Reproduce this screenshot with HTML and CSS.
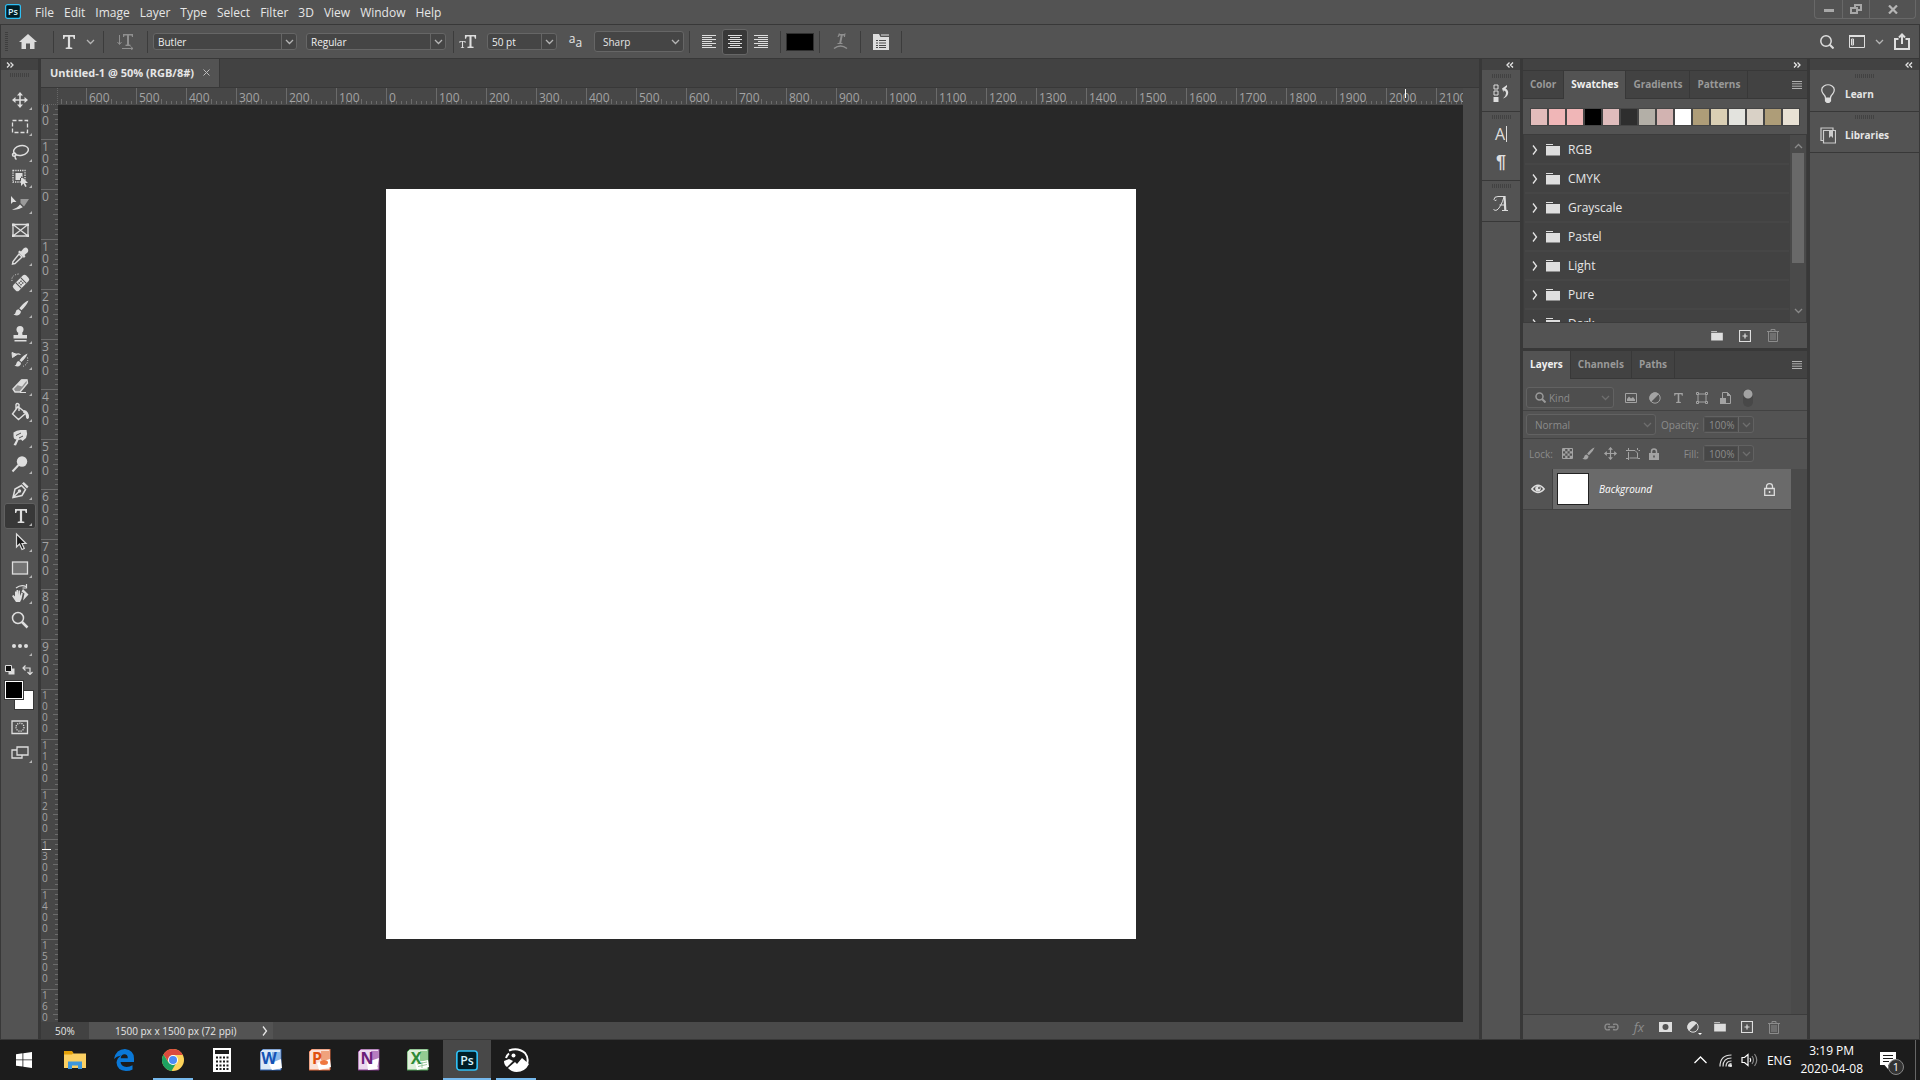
FILE: index.html
```html
<!DOCTYPE html>
<html lang="en">
<head>
  <meta charset="UTF-8" />
  <meta name="viewport" content="width=device-width, initial-scale=1.0"/>
  <title>Untitled-1 @ 50% (RGB/8#)</title>
  <link rel="stylesheet" href="styles.css">
</head>
<body>

  <!-- shared shapes -->
  <svg class="sprite" aria-hidden="true">
    <symbol id="chevron" viewBox="0 0 9 6"><path d="M1 1l3.500 3.500L8 1" fill="none" stroke="currentColor" stroke-width="1.300"/></symbol>
    <symbol id="expand" viewBox="0 0 6 12"><path d="M1 1.500L4.500 6 1 10.500" fill="none" stroke="currentColor" stroke-width="1.300"/></symbol>
    <symbol id="dbl-left" viewBox="0 0 8 6"><path d="M3.500.500L1 3l2.500 2.500M7 .500L4.500 3 7 5.500" fill="none" stroke="currentColor" stroke-width="1.300"/></symbol>
    <symbol id="dbl-right" viewBox="0 0 8 6"><path d="M1 .500L3.500 3 1 5.500M4.500.500L7 3 4.500 5.500" fill="none" stroke="currentColor" stroke-width="1.300"/></symbol>
    <symbol id="folder" viewBox="0 0 14 12"><path d="M0 0h7v1H0zM0 2h14v9.500H0z" fill="currentColor"/></symbol>
    <symbol id="plus" viewBox="0 0 12 12"><path d="M.5.5h11v11H.5zM6 3.500v5M3.500 6h5" fill="none" stroke="currentColor" stroke-width="1.200"/></symbol>
    <symbol id="trash" viewBox="0 0 12 13"><path d="M0 2.500h12M4 2V.500h4V2M1.500 3v9.500h9V3M4 4v7M6 4v7M8 4v7" fill="none" stroke="currentColor"/></symbol>
    <symbol id="lines" viewBox="0 0 10 8"><path d="M0 .5h10M0 2.800h10M0 5.200h10M0 7.500h10" stroke="currentColor"/></symbol>
    <symbol id="big-t" viewBox="0 0 14 14"><path d="M1 0h12v4h-1.200L11 1.700H8.100v10.600l2.200.4V14H3.700v-1.300l2.200-.4V1.700H3L2.200 4H1z" fill="currentColor"/></symbol>
    <symbol id="move" viewBox="0 0 16 16"><path d="M8 1v14M1 8h14" stroke="currentColor" stroke-width="1.500"/><path d="M8 0l3 3.500H5zM8 16l3-3.500H5zM0 8l3.500-3v6zM16 8l-3.500-3v6z" fill="currentColor"/></symbol>
    <symbol id="brush" viewBox="0 0 16 16"><path d="M15.500.500Q11 2 6.300 8.300l2.200 2Q14 5 15.500.500zM5.500 9.200Q3 9.500 2.700 12 2.500 14 .5 14.500q4.500 2 6.500-.5 1.200-1.500.8-2.800z" fill="currentColor"/></symbol>
    <symbol id="adjust" viewBox="0 0 12 12"><circle cx="6" cy="6" r="5.200" fill="none" stroke="currentColor"/><path d="M10 2A5.600 5.600 0 1 0 2 10z" fill="currentColor"/></symbol>
    <symbol id="ps" viewBox="0 0 16 15"><rect x=".6" y=".6" width="14.800" height="13.800" rx="2" fill="#001d26" stroke="#2fc0f5" stroke-width="1.200"/><text x="8" y="10.800" text-anchor="middle" font-size="9" font-weight="600" fill="#d8f3fd">Ps</text></symbol>
  </svg>

  <header class="menubar">
    <svg class="app-logo" width="16" height="15"><use href="#ps"/></svg>
    <nav class="menus">
      <button>File</button><button>Edit</button><button>Image</button><button>Layer</button><button>Type</button><button>Select</button><button>Filter</button><button>3D</button><button>View</button><button>Window</button><button>Help</button>
    </nav>
    <div class="window-buttons">
      <button aria-label="Minimize"><svg width="10" height="10"><path d="M0 5h10v3H0z" fill="#a8a8a8"/></svg></button>
      <button aria-label="Restore"><svg width="12" height="10" fill="none" stroke="#a8a8a8" stroke-width="2"><path d="M5 3V1h6v5H8M1 4h6v5H1z"/></svg></button>
      <button aria-label="Close" class="wide"><svg width="10" height="9" stroke="#b5b5b5" stroke-width="2.200"><path d="M1 .5l8 8M9 .5l-8 8"/></svg></button>
    </div>
  </header>

  <div class="options">
    <span class="grip-v"></span>
    <button class="opt home" aria-label="Home"><svg width="18" height="15" fill="#dcdcdc"><path d="M9 0l9 8h-2.500v7h-4.500V9.500H7V15H2.500V8H0z"/></svg></button>
    <span class="sep first"></span>
    <button class="opt tool-pick" aria-label="Type tool presets"><svg class="bright" width="14" height="14"><use href="#big-t"/></svg><svg width="9" height="6"><use href="#chevron"/></svg></button>
    <span class="sep"></span>
    <button class="opt orient" aria-label="Toggle text orientation"><svg class="dim" width="18" height="16"><path d="M2.500 1v9M0.500 8l2 2.500 2-2.500M5 14.500h11M13.500 12.500l2.500 2-2.500 2" fill="none" stroke="currentColor"/><path d="M6 0h10v3h-1l-.5-1.500H12v9l1.500.3V12H8.500v-1.200l1.500-.3v-9H7.500L7 3H6z" fill="currentColor"/></svg></button>
    <span class="sep"></span>
    <div class="combo font"><input type="text" value="Butler" aria-label="Font family"><button aria-label="Show fonts"><svg width="9" height="6"><use href="#chevron"/></svg></button></div>
    <div class="combo style"><input type="text" value="Regular" aria-label="Font style"><button aria-label="Show styles"><svg width="9" height="6"><use href="#chevron"/></svg></button></div>
    <span class="sep wide"></span>
    <span class="opt size-icon"><svg class="bright" width="18" height="14"><use href="#big-t" x="5" width="13" height="13"/><use href="#big-t" x="0" y="6" width="7" height="7"/></svg></span>
    <div class="combo size"><input type="text" value="50 pt" aria-label="Font size"><button aria-label="Show sizes"><svg width="9" height="6"><use href="#chevron"/></svg></button></div>
    <span class="opt aa"><span>a</span><span class="low">a</span></span>
    <div class="picker sharp"><select aria-label="Anti-aliasing"><option>Sharp</option></select><svg width="9" height="6"><use href="#chevron"/></svg></div>
    <span class="sep mid"></span>
    <div class="aligns">
      <button aria-label="Left align"><svg width="14" height="13" stroke="#dedede"><path d="M0 .5h14M0 2.500h10M0 4.500h14M0 6.500h10M0 8.500h14M0 10.500h10M0 12.500h14"/></svg></button>
      <button class="on" aria-label="Center"><svg width="14" height="13" stroke="#dedede"><path d="M0 .5h14M2 2.500h10M0 4.500h14M2 6.500h10M0 8.500h14M2 10.500h10M0 12.500h14"/></svg></button>
      <button aria-label="Right align"><svg width="14" height="13" stroke="#dedede"><path d="M0 .5h14M4 2.500h10M0 4.500h14M4 6.500h10M0 8.500h14M4 10.500h10M0 12.500h14"/></svg></button>
    </div>
    <span class="sep"></span>
    <button class="text-color" aria-label="Text color"></button>
    <span class="sep mid"></span>
    <button class="opt" aria-label="Warp text"><svg class="dim" width="15" height="17"><path d="M6 0l1 1h4l1.500-1-.5 4h-1l-.3-1.500H9.700L8.200 10H9.500v1h-5v-1h1.700L7.700 2.500H6.500L5.500 4h-1z" fill="currentColor"/><path d="M1 15.500q6.500-5 13 0" fill="none" stroke="currentColor" stroke-width="1.500"/></svg></button>
    <span class="sep"></span>
    <button class="opt" aria-label="Character and paragraph panels"><svg width="16" height="16"><path d="M0 0h6l1.500 3H16v13H0z" fill="#dedede"/><path d="M8 1h8" stroke="#9a9a9a" stroke-width="2"/><path d="M3 6.500h2M6 6.500h7M3 9h2M6 9h7M3 11.500h2M6 11.500h7M3 13.500h2M6 13.500h7" stroke="#4a4a4a"/></svg></button>
    <span class="sep"></span>
    <div class="options-right">
      <button aria-label="Search"><svg width="14" height="14" fill="none" stroke="#dedede"><circle cx="6" cy="6" r="5.200" stroke-width="1.500"/><path d="M9.800 9.800l3.700 3.700" stroke-width="2"/></svg></button>
      <button aria-label="Workspace"><svg width="16" height="13" fill="none" stroke="#dedede"><path d="M.5 1h15v11.500H.5zM2.500 4h2v6h-2zM2.500 6h2M2.500 8h2"/><path d="M0 1h16" stroke-width="2"/></svg></button>
      <button aria-label="Workspace menu"><svg width="9" height="6"><use href="#chevron"/></svg></button>
      <button aria-label="Share"><svg width="16" height="17" fill="none" stroke="#dedede" stroke-width="2"><path d="M4.500 6H1v10h14V6h-3.500M8 11V2M5 4.500l3-3 3 3"/></svg></button>
    </div>
  </div>

  <main class="workspace">
    <aside class="toolbox">
      <button class="col-head left" aria-label="Expand tools"><svg width="8" height="6"><use href="#dbl-right"/></svg></button>
      <span class="grip"></span>
      <div class="tools">
        <button class="tool" aria-label="Move"><svg viewBox="0 0 24 24"><use href="#move" x="4" y="4" width="16" height="16"/></svg></button>
        <button class="tool" aria-label="Rectangular marquee"><svg viewBox="0 0 24 24"><rect x="4.500" y="6.500" width="15" height="12" fill="none" stroke="currentColor" stroke-width="1.300" stroke-dasharray="4 2"/></svg></button>
        <button class="tool" aria-label="Lasso"><svg viewBox="0 0 24 24" fill="none" stroke="currentColor" stroke-width="1.500"><ellipse cx="13" cy="10.500" rx="7.500" ry="4.800" transform="rotate(-12 13 10.500)"/><path d="M6 13q-2 1-1.200 2.800 2 1 3.200-.8-.5-2.500-2-2M7 16.500q0 2 1.500 3"/></svg></button>
        <button class="tool" aria-label="Object selection"><svg viewBox="0 0 24 24"><rect x="5" y="4.500" width="12" height="11.500" fill="none" stroke="currentColor" stroke-width="1.300" stroke-dasharray="1.300 1"/><path d="M7.500 7h7v5h-2.500v2H7.500zM13 10v10l2.500-2.500 1.700 3.500 1.500-.8-1.700-3.200H20z" fill="currentColor"/></svg></button>
        <button class="tool" aria-label="Slice select"><svg viewBox="0 0 24 24"><path d="M3 4v8l2-2h3.500zM4 17.500q5-1 8-5l2.800 2.800Q10 18.500 4 17.500z" fill="currentColor"/><path d="M12.500 7H21l-5 7.500-3.500-3.500z" fill="#9a9a9a"/></svg></button>
        <button class="tool bare" aria-label="Frame"><svg viewBox="0 0 24 24"><path d="M5 6.500h15v11.500H5zM5 6.500L20 18M20 6.500L5 18" fill="none" stroke="currentColor" stroke-width="1.300"/><path d="M4 5.500h2.500V8H4zM18.500 5.500H21V8h-2.500zM4 16.500h2.500V19H4zM18.500 16.500H21V19h-2.500z" fill="currentColor"/></svg></button>
        <button class="tool" aria-label="Eyedropper"><svg viewBox="0 0 24 24"><path d="M11 10l3 3-7 6.500-2.500.5.500-2.500z" fill="none" stroke="currentColor" stroke-width="1.400"/><path d="M10 8l1.700-1.500L13 7.500l2.500-3q2.500-2 4 0t0 4l-3 2.500 1 1.300-1.500 1.700z" fill="currentColor"/></svg></button>
        <button class="tool" aria-label="Spot healing brush"><svg viewBox="0 0 24 24"><g transform="rotate(-45 13 13)"><rect x="4" y="9" width="18" height="8" rx="2.500" fill="currentColor"/><path d="M9.500 9v8M16.500 9v8" stroke="#535353"/><path d="M11 11h1.500v1.500H11zM13.500 11H15v1.500h-1.500zM11 13.500h1.500V15H11zM13.500 13.500H15V15h-1.500z" fill="#535353"/></g><path d="M4 11q-1-6 6.500-7" fill="none" stroke="currentColor" stroke-dasharray="1 1.500"/></svg></button>
        <button class="tool" aria-label="Brush"><svg viewBox="0 0 24 24"><use href="#brush" x="5" y="4" width="16" height="16"/></svg></button>
        <button class="tool" aria-label="Clone stamp"><svg viewBox="0 0 24 24"><circle cx="12" cy="7.500" r="3.500" fill="currentColor"/><path d="M10.500 9h3.500l.5 4H19v3.500H5.500V13H10zM6.500 18h12v1.500h-12z" fill="currentColor"/></svg></button>
        <button class="tool" aria-label="History brush"><svg viewBox="0 0 24 24"><use href="#brush" x="6" y="5" width="14" height="14"/><path d="M4 4.500l5 2-4.500 3zM7 6.500q4-1.500 5.500 0" fill="currentColor" stroke="currentColor"/><path d="M19.500 9.500q1.500 7-6 9.500" fill="none" stroke="currentColor" stroke-dasharray="1 1.500"/></svg></button>
        <button class="tool" aria-label="Eraser"><svg viewBox="0 0 24 24"><path d="M5 15l8.500-9h5.500l.5 3-7.500 9H7z" fill="#8f8f8f" stroke="currentColor" stroke-width="1.400"/><path d="M9 11l5-5.500h5.500l-5.500 7z" fill="currentColor"/><path d="M12 18.500h6" stroke="currentColor"/></svg></button>
        <button class="tool" aria-label="Paint bucket"><svg viewBox="0 0 24 24"><path d="M10 6.500l8 6.500-7.500 6.500-6-5.500zM11 11V4.500q-2-2-3 0V10" fill="none" stroke="currentColor" stroke-width="1.400"/><path d="M16 10q5 1 5 7.500-1.500 3-3 0 0-4-3-5z" fill="currentColor"/></svg></button>
        <button class="tool" aria-label="Smudge"><svg viewBox="0 0 24 24"><path d="M5.500 19l3-5.500q-3 0-3-3.500V6.500q3-2.500 7-2.500h6q1.500 4-.5 8l-3.500 3-1.500-1.500-2.500.5L8 19.500z" fill="currentColor"/><path d="M8 9.500l5-2.500M11 12l4-2" stroke="#535353"/></svg></button>
        <button class="tool" aria-label="Dodge"><svg viewBox="0 0 24 24"><circle cx="14" cy="9.500" r="5.200" fill="currentColor"/><path d="M10.500 13L4.500 19.500" stroke="currentColor" stroke-width="2"/></svg></button>
        <button class="tool" aria-label="Pen"><svg viewBox="0 0 24 24"><path d="M5 19.500l2-8.500 6.500-3.500 4 4-3.500 6-9 2zM5 19.500l6-6" fill="none" stroke="currentColor" stroke-width="1.500"/><circle cx="11.500" cy="13" r="1.700" fill="currentColor"/><path d="M14 5.500l1.800-1.500 4.700 4.500-1.500 2z" fill="currentColor"/></svg></button>
        <button class="tool on" aria-label="Horizontal type"><svg viewBox="0 0 24 24"><use href="#big-t" x="6" y="5" width="14" height="14"/></svg></button>
        <button class="tool" aria-label="Path selection"><svg viewBox="0 0 24 24"><path d="M8.500 4v13l3-3 2.500 5.500 2.300-1-2.300-5h4z" fill="#1c1c1c" stroke="currentColor" stroke-width="1.200"/></svg></button>
        <button class="tool" aria-label="Rectangle"><svg viewBox="0 0 24 24"><rect x="4.500" y="6" width="15" height="12" fill="#747474" stroke="currentColor" stroke-width="1.300"/></svg></button>
        <button class="tool" aria-label="Rotate view"><svg viewBox="0 0 24 24"><path d="M8 20l-4-6 1.500-1 1.500 1.500V9.500h1.500V13V8H10v5l.5-4.500H12V14l1.500-3.500 1.300.5-1.300 6-1.500 3z" fill="currentColor"/><path d="M15 7l5.500 5.500-5.500 6 1.500-7-3-2z" fill="currentColor"/><path d="M8 6q5-4 10-1.500M18.500 2v4h-4" fill="none" stroke="currentColor" stroke-width="1.200"/></svg></button>
        <button class="tool bare" aria-label="Zoom"><svg viewBox="0 0 24 24" fill="none" stroke="currentColor"><circle cx="10" cy="10" r="5.500" stroke-width="1.500"/><path d="M14 14l5.500 5.500" stroke-width="2.500"/></svg></button>
        <button class="tool" aria-label="Edit toolbar"><svg viewBox="0 0 24 24" fill="currentColor"><circle cx="6" cy="12" r="2"/><circle cx="12" cy="12" r="2"/><circle cx="18" cy="12" r="2"/></svg></button>
      </div>
      <div class="color-minis">
        <button aria-label="Default colors"><svg width="10" height="10"><path d="M3.500 3.500h6v6h-6z" fill="#ddd"/><path d="M.5.5h6v6h-6z" fill="#111" stroke="#ddd"/></svg></button>
        <button aria-label="Switch colors"><svg width="11" height="10" fill="none" stroke="#ddd" stroke-width="1.200"><path d="M3.500.500L1 3l2.500 2.500M1 3h7v6M5.500 7L8 9.500 10.500 7"/></svg></button>
      </div>
      <div class="fgbg"><button class="bg" aria-label="Background color"></button><button class="fg" aria-label="Foreground color"></button></div>
      <button class="tool bare" aria-label="Quick mask"><svg viewBox="0 0 24 24" fill="none" stroke="currentColor" stroke-width="1.300"><path d="M4 6h15.500v12.500H4z"/><circle cx="12" cy="12.200" r="4" stroke-dasharray="1.200 1"/></svg></button>
      <button class="tool" aria-label="Screen mode"><svg viewBox="0 0 24 24" fill="#535353" stroke="currentColor" stroke-width="1.300"><path d="M4 9h10v8H4z"/><path d="M9 6h11v8H9z"/></svg></button>
    </aside>

    <section class="document">
      <div class="doc-tabs">
        <div class="doc-tab"><span>Untitled-1 @ 50% (RGB/8#)</span><button aria-label="Close document"><svg width="7" height="7" stroke="#bdbdbd"><path d="M.5.5l6 6M6.500.500l-6 6"/></svg></button></div>
      </div>
      <div class="doc-grid">
        <div class="ruler-corner"></div>
        <div class="ruler-x" id="rulerX"><span class="mark"></span></div>
        <div class="ruler-y" id="rulerY"><span class="mark"></span></div>
        <div class="canvas"><div class="artboard"></div></div>
        <div class="scroll-y"></div>
      </div>
      <footer class="status">
        <input type="text" value="50%" aria-label="Zoom level">
        <div class="doc-info"><span>1500 px x 1500 px (72 ppi)</span><button aria-label="Status options"><svg width="6" height="12"><use href="#expand"/></svg></button></div>
      </footer>
    </section>

    <aside class="strip">
      <button class="col-head" aria-label="Expand panels"><svg width="8" height="6"><use href="#dbl-left"/></svg></button>
      <div class="dock">
        <span class="grip"></span>
        <button aria-label="History"><svg width="16" height="18"><path d="M1 1h4v4H1zM1 7h4v4H1z" fill="none" stroke="#ddd"/><path d="M.5 13h5v5h-5z" fill="#ddd"/><path d="M9 4.500l5-3.500v2l-1.500 1.500q3.500 2 2.500 5.500-1 3-5 4.500 3-2.500 3-5 0-3-2.500-3v2z" fill="#ddd"/></svg></button>
      </div>
      <div class="dock">
        <span class="grip"></span>
        <button class="glyph-a" aria-label="Character">A<span class="caret"></span></button>
        <button class="glyph-p" aria-label="Paragraph">¶</button>
      </div>
      <div class="dock">
        <span class="grip"></span>
        <button aria-label="Glyphs"><svg width="16" height="17" fill="none" stroke="#ddd"><path d="M12 1.500H5Q1 1.500 1 4.500q1 2 2.500.5M11 2Q8 12 4 15q-2 1-3.500-.5M6.500 10h5.500M9 15.500h6"/><path d="M11.500 1l.8 14.500" stroke-width="2.200"/></svg></button>
      </div>
    </aside>

    <div class="panels">
      <button class="col-head right" aria-label="Collapse panels"><svg width="8" height="6"><use href="#dbl-right"/></svg></button>
      <section class="panel">
        <div class="tabs">
          <button>Color</button><button class="on">Swatches</button><button>Gradients</button><button>Patterns</button>
          <button class="panel-menu" aria-label="Panel menu"><svg width="10" height="8"><use href="#lines"/></svg></button>
        </div>
        <div class="recent" id="recent"></div>
        <div class="group-wrap">
          <ul class="groups" id="groups"></ul>
          <div class="list-scroll"><svg width="9" height="6" class="flip"><use href="#chevron"/></svg><span class="thumb"></span><svg width="9" height="6"><use href="#chevron"/></svg></div>
        </div>
        <div class="panel-foot">
          <button aria-label="New group"><svg width="12" height="10"><use href="#folder"/></svg></button>
          <button aria-label="New swatch"><svg width="12" height="12"><use href="#plus"/></svg></button>
          <button class="off" aria-label="Delete swatch"><svg width="12" height="13"><use href="#trash"/></svg></button>
        </div>
      </section>

      <section class="panel layers">
        <div class="tabs">
          <button class="on">Layers</button><button>Channels</button><button>Paths</button>
          <button class="panel-menu" aria-label="Panel menu"><svg width="10" height="8"><use href="#lines"/></svg></button>
        </div>
        <div class="row filter">
          <div class="picker kind"><svg width="11" height="11" fill="none" stroke="#999" stroke-width="1.500"><circle cx="4.500" cy="4.500" r="3.500"/><path d="M7 7l3.500 3.500" stroke-width="2"/></svg><select aria-label="Filter kind"><option>Kind</option></select><svg width="9" height="6"><use href="#chevron"/></svg></div>
          <div class="filters">
            <button aria-label="Pixel layers"><svg width="12" height="10"><path d="M.5.5h11v9H.5z" fill="none" stroke="currentColor"/><path d="M2 8V6l2-2.500 2 2 2-1.500L10 6.500V8z" fill="currentColor"/></svg></button>
            <button aria-label="Adjustment layers"><svg width="12" height="12"><use href="#adjust"/></svg></button>
            <button aria-label="Type layers"><svg width="11" height="10"><use href="#big-t"/></svg></button>
            <button aria-label="Shape layers"><svg width="12" height="12" fill="none" stroke="currentColor"><path d="M2 2h8v8H2z"/><path d="M.5.5h2v2h-2zM9.500.5h2v2h-2zM.5 9.500h2v2h-2zM9.500 9.500h2v2h-2z" fill="#535353"/></svg></button>
            <button aria-label="Smart objects"><svg width="11" height="12"><path d="M2.500 6V.500h5L10.500 3.500v8H6" fill="none" stroke="currentColor"/><path d="M0 6h6v6H0zM7 0v4h4z" fill="currentColor"/></svg></button>
            <label class="toggle"><input type="checkbox" aria-label="Layer filtering"><span></span></label>
          </div>
        </div>
        <div class="row blend">
          <div class="picker mode"><select aria-label="Blend mode"><option>Normal</option></select><svg width="9" height="6"><use href="#chevron"/></svg></div>
          <label for="opacity">Opacity:</label>
          <div class="combo percent"><input type="text" id="opacity" value="100%"><button aria-label="Opacity slider"><svg width="9" height="6"><use href="#chevron"/></svg></button></div>
        </div>
        <div class="row locks">
          <span>Lock:</span>
          <div class="lock-set">
            <button aria-label="Lock transparent pixels"><svg width="11" height="11"><path d="M.5.5h10v10H.5z" fill="none" stroke="currentColor"/><path d="M1 1h2.200v2.200H1zM5.500 1h2.200v2.200H5.500zM3.200 3.200h2.300v2.300H3.200zM7.700 3.200H10v2.300H7.700zM1 5.500h2.200v2.200H1zM5.500 5.500h2.200v2.200H5.500zM3.200 7.700h2.300V10H3.200zM7.700 7.700H10V10H7.700z" fill="currentColor"/></svg></button>
            <button aria-label="Lock image pixels"><svg width="13" height="13"><use href="#brush"/></svg></button>
            <button aria-label="Lock position"><svg width="13" height="13"><use href="#move"/></svg></button>
            <button aria-label="Lock artboard nesting"><svg width="14" height="12" fill="none" stroke="currentColor"><path d="M0 2.500h9L11.500 5v5H3.500M2.500 0v2M2.500 4v8M0 10.500h2M11.500 10.500H14M11.500 0v2M12.500 2.500H14" /></svg></button>
            <button aria-label="Lock all"><svg width="10" height="12"><path d="M2.500 6V3.500q0-2.500 2.500-2.500t2.500 2.500V6" fill="none" stroke="currentColor" stroke-width="1.500"/><path d="M0 5h10v7H0z" fill="currentColor"/><path d="M4.200 7.500h1.600v2H4.200z" fill="#535353"/></svg></button>
          </div>
          <label for="fill">Fill:</label>
          <div class="combo percent"><input type="text" id="fill" value="100%"><button aria-label="Fill slider"><svg width="9" height="6"><use href="#chevron"/></svg></button></div>
        </div>
        <div class="layer-list">
          <div class="layer">
            <button class="eye" aria-label="Toggle visibility"><svg width="14" height="10"><path d="M.8 5Q7-2.500 13.200 5 7 12 .8 5z" fill="none" stroke="#ddd" stroke-width="1.400"/><circle cx="7" cy="4.800" r="2.800" fill="#ddd"/><circle cx="8" cy="4" r="1" fill="#535353"/></svg></button>
            <div class="layer-main"><span class="preview"></span><em>Background</em><svg width="11" height="13"><path d="M2.500 5.500V3.500q0-2.800 3-2.800t3 2.800v2M.7 5.500h9.600v6.800H.7z" fill="none" stroke="#ddd" stroke-width="1.300"/><path d="M4.800 8h1.500v2H4.800z" fill="#ddd"/></svg></div>
          </div>
        </div>
        <div class="panel-foot">
          <button class="off" aria-label="Link layers"><svg width="15" height="8" fill="none" stroke="currentColor" stroke-width="1.400"><path d="M6 1.500Q1 0 1 4t5 2.500M9 1.500Q14 0 14 4T9 6.500M4 4h7"/></svg></button>
          <button class="off fx" aria-label="Layer style">fx</button>
          <button aria-label="Add mask"><svg width="13" height="10"><path d="M0 0h13v10H0z" fill="currentColor"/><circle cx="6.500" cy="5" r="3" fill="#535353"/></svg></button>
          <button class="more" aria-label="New adjustment layer"><svg width="12" height="12"><use href="#adjust"/></svg></button>
          <button aria-label="New group"><svg width="12" height="10"><use href="#folder"/></svg></button>
          <button aria-label="New layer"><svg width="12" height="12"><use href="#plus"/></svg></button>
          <button class="off" aria-label="Delete layer"><svg width="12" height="13"><use href="#trash"/></svg></button>
        </div>
      </section>
    </div>

    <aside class="side">
      <button class="col-head right" aria-label="Expand side panels"><svg width="8" height="6"><use href="#dbl-left"/></svg></button>
      <div class="dock"><span class="grip"></span><button><svg width="16" height="20" fill="none" stroke="#ddd" stroke-width="1.200"><path d="M5.500 14q0-2-2.500-4.500-3-5 1-7.500 4-2.500 8 0t1 7.500Q10.500 12 10.500 14z"/><path d="M5.500 14.500h5v2.500L9 18.500H7L5.500 17z" fill="#ddd"/></svg>Learn</button></div>
      <div class="dock"><span class="grip"></span><button><svg width="16" height="17" fill="none" stroke="#ccc" stroke-width="1.200"><path d="M3.500 3.500h12v12.500h-12zM3 13.500H1V1h12v2"/><path d="M9 4h4v7l-2-2-2 2z" fill="#ccc" stroke="none"/></svg>Libraries</button></div>
    </aside>
  </main>

  <footer class="taskbar">
    <button class="start" aria-label="Start"><svg width="16" height="16" fill="#fff"><path d="M0 2.200L6.500 1.300v6.200H0zM7.300 1.200L16 0v7.500H7.300zM0 8.300h6.500v6.300L0 13.700zM7.300 8.300H16V16l-8.700-1.200z"/></svg></button>
    <button aria-label="File Explorer"><svg width="22" height="18"><path d="M0 1h8l1.500 1.500H22V17H0z" fill="#fbd063"/><path d="M0 0h8l1.500 2L8 3.500H0z" fill="#e3a008"/><path d="M4 18v-7.500h14V18h-4v-3.500H8V18z" fill="#3e97dd"/></svg></button>
    <button aria-label="Edge"><svg width="20" height="22"><path d="M0 10Q2 0 11 0q9 1 9 9.500V13H6.500q.5 4.500 6 5 3.500 0 6-1.700v4.200Q16 22 12 22 3 21.500 2.500 13.500 3 9 7 6.500 2.500 7 0 10zM6.700 9.200h7.100q0-4-3.300-4T6.700 9.200z" fill="#0a78d7" fill-rule="evenodd"/></svg></button>
    <button class="open" aria-label="Chrome"><svg width="22" height="22"><circle cx="11" cy="11" r="11" fill="#fdd35a"/><path d="M1.500 5.500A11 11 0 0 1 20.700 6H11L6.500 13z" fill="#db4b3e"/><path d="M1.500 5.500A11 11 0 0 0 9.500 22l5-8.500L6.500 13.500z" fill="#1ea261"/><circle cx="11" cy="11" r="5" fill="#fff"/><circle cx="11" cy="11" r="4" fill="#4c8bf5"/></svg></button>
    <button aria-label="Calculator"><svg width="18" height="24"><path d="M0 0h18v24H0z" fill="#fff"/><path d="M2 2h14v4H2z" fill="#1c1c1c"/><path d="M3 9.500h13M3 13.500h13M3 17.500h13M3 21h13" stroke="#1c1c1c" stroke-width="2" stroke-dasharray="2 1.500"/></svg></button>
    <button aria-label="Word"><svg width="22" height="22"><path d="M3 0h18v21H0V3z" fill="#dbe9f7" stroke="#2a5fae"/><path d="M12 3h8v12h-8z" fill="#8db8e8"/><path d="M9 15l12-5 1 9-10 2z" fill="#fff"/><text x="9" y="15" text-anchor="middle" font-size="16" font-weight="700" fill="#1553b5">W</text></svg></button>
    <button aria-label="PowerPoint"><svg width="22" height="22"><path d="M3 0h18v21H0V3z" fill="#fbe3d8" stroke="#e2683a"/><path d="M12 2h8v9h-8z" fill="#f0a27c"/><path d="M8 14l13-4 1 8-12 3z" fill="#fff"/><ellipse cx="15" cy="13.500" rx="4" ry="2.500" fill="#ef7840"/><text x="8" y="15" text-anchor="middle" font-size="16" font-weight="700" fill="#e0520f">P</text></svg></button>
    <button aria-label="OneNote"><svg width="22" height="22"><path d="M3 0h18v21H0V3z" fill="#ecd9ee" stroke="#80368a"/><path d="M13 2h7v16h-7z" fill="#b77cc0"/><path d="M9 13l12-4-2 11-9 1z" fill="#fff"/><text x="9" y="15" text-anchor="middle" font-size="16" font-weight="700" fill="#6c1f7a">N</text></svg></button>
    <button aria-label="Excel"><svg width="22" height="22"><path d="M3 0h18v21H0V3z" fill="#e0f0dc" stroke="#4b9d52"/><path d="M13 2h7v10h-7z" fill="#93cb91"/><path d="M8 14l13-3 1 7-12 3z" fill="#fff"/><path d="M10 15l10-2M11 17.500l9-2M15 13v6" stroke="#9ac79b"/><text x="9" y="15" text-anchor="middle" font-size="16" font-weight="700" fill="#2f8a37">X</text></svg></button>
    <button class="open current" aria-label="Photoshop"><svg width="22" height="21"><use href="#ps"/></svg></button>
    <button class="open" aria-label="Photo viewer"><svg width="25" height="24"><path d="M2 10Q3 7 5 5.500M5 2.500Q14-1 21 5q4 5 2 11" fill="none" stroke="#fff" stroke-width="2"/><path d="M0 13l5-2 4 2-6 6Q0 17 0 13zM4 20l7-6 2 2 5-6 7 6q-4 8-12.500 8-5 0-8.500-4z" fill="#fff"/><circle cx="9.500" cy="7.500" r="2" fill="#fff"/></svg></button>
    <div class="tray">
      <button class="up" aria-label="Show hidden icons"><svg width="13" height="8" fill="none" stroke="#fff" stroke-width="1.300"><path d="M.5 7l6-6 6 6"/></svg></button>
      <button aria-label="Network"><svg width="13" height="13" fill="none" stroke="#ddd" stroke-width="1.200"><path d="M1 12.500Q1 1 12.500 1M4 12.500Q4 4 12.500 4M7 12.500q0-5.500 5.500-5.500M9.500 12.500q0-3 3-3"/><circle cx="11.500" cy="11.500" r="1" fill="#fff"/></svg></button>
      <button aria-label="Volume"><svg width="17" height="14" fill="none" stroke="#fff" stroke-width="1.200"><path d="M1 4.500h2.500L7 1.500v11L3.500 9.500H1zM9 5q1.500 2 0 4"/><path d="M11 3q3 4 0 8M13.500 1q4.500 6 0 12" stroke="#888"/></svg></button>
      <button class="lang">ENG</button>
      <button class="clock"><span>3:19 PM</span><span>2020-04-08</span></button>
      <button class="notify" aria-label="Notifications"><svg width="16" height="17"><path d="M0 0h16v13H8v4l-3.500-4H0z" fill="#fff"/><path d="M3 3.500h10M3 6.500h10M3 9.500h6" stroke="#1c1c1c"/></svg><span>1</span></button>
      <span class="show-desktop"></span>
    </div>
  </footer>

  <script>
    // Rulers: one block per 100 px of document, from the first one in view
    function fillRuler(id, from, to) {
      const ruler = document.getElementById(id);
      for (let n = from; n <= to; n += 100) {
        const unit = document.createElement("span");
        const value = String(Math.abs(n));
        unit.className = value.length > 3 ? "unit long" : "unit";
        unit.innerHTML = `<b>${value}</b>`;
        ruler.appendChild(unit);
      }
    }

    fillRuler("rulerX", -700, 2100);
    fillRuler("rulerY", -200, 1600);

    const recent = ["#e2bcbb", "#f0b6b7", "#f0b6b7", "#000000", "#dfbcbc", "#2e2e2e", "#b3afa7", "#d2b3b1", "#ffffff", "#ae9d78", "#dacfb4", "#e3e3de", "#d9d1c6", "#ae9d78", "#e8e1d4"];
    recent.forEach(color => {
      const chip = document.createElement("button");
      chip.style.background = color;
      chip.setAttribute("aria-label", color);
      document.getElementById("recent").appendChild(chip);
    });

    ["RGB", "CMYK", "Grayscale", "Pastel", "Light", "Pure", "Dark"].forEach(name => {
      const row = document.createElement("li");
      row.innerHTML = `
        <button>
          <svg width="6" height="12"><use href="#expand"/></svg>
          <svg class="bright" width="14" height="12"><use href="#folder"/></svg>
          ${name}
        </button>
      `;
      document.getElementById("groups").appendChild(row);
    });
  </script>

</body>
</html>
```
FILE: styles.css
```css
* {
  box-sizing: border-box;
}

body {
  margin: 0;
  height: 100vh;
  display: flex;
  flex-direction: column;
  overflow: hidden;
  background: #383838;
  color: #e6e6e6;
  font-family: "Open Sans", "Noto Sans", sans-serif;
  font-size: 12px;
}

button, input, select {
  font: inherit;
  color: inherit;
  background: none;
  border: none;
  padding: 0;
  margin: 0;
  min-width: 0;
}

button {
  display: flex;
  align-items: center;
  justify-content: center;
}

svg {
  flex: none;
  display: block;
}

.sprite {
  position: absolute;
  width: 0;
  height: 0;
}

.bright {
  color: #dedede;
}

.dim {
  color: #8f8f8f;
}

/* Menu bar */
.menubar {
  display: flex;
  height: 24px;
  padding-left: 5px;
  background: #535353;
}

.app-logo {
  margin-top: 4px;
}

.menus {
  display: flex;
  gap: 10px;
  padding-left: 14px;
  flex: 1;
}

.window-buttons {
  display: flex;
  height: 19px;
  margin-right: 4px;
  border: 1px solid #686868;
  border-top: none;
  border-radius: 0 0 4px 4px;
}

.window-buttons button {
  width: 27px;
}

.window-buttons .wide {
  width: 46px;
}

.window-buttons button + button {
  border-left: 1px solid #686868;
}

/* Options bar */
.options {
  display: flex;
  align-items: center;
  height: 33px;
  margin: 1px 1px 1px 0;
  background: #535353;
  border-left: 1px solid #383838;
  font-size: 10px;
}

.grip-v {
  width: 3px;
  height: 20px;
  margin: 0 2px 0 4px;
  background: repeating-linear-gradient(#3e3e3e 0 1px, #535353 1px 2px);
}

.sep {
  width: 1px;
  height: 22px;
  background: #3c3c3c;
}

.sep.first,
.sep.wide {
  margin-left: 7px;
}

.sep.mid {
  margin-left: 5px;
}

.opt {
  width: 40px;
  height: 26px;
}

.opt.home {
  width: 36px;
}

.opt.tool-pick {
  width: 49px;
  gap: 10px;
  color: #b5b5b5;
}

.opt.orient {
  width: 43px;
}

.opt.size-icon {
  width: 33px;
  display: flex;
  align-items: center;
  padding-left: 5px;
}

.opt.aa {
  width: 37px;
  display: flex;
  justify-content: center;
  font-size: 12px;
  line-height: 20px;
}

.aa .low {
  padding-top: 4px;
}

.combo {
  display: flex;
  height: 17px;
  border: 1px solid #666;
  border-radius: 3px;
  background: #454545;
  color: #f0f0f0;
}

.combo input {
  flex: 1;
  padding-left: 4px;
}

.combo button {
  width: 15px;
  border-left: 1px solid #666;
  color: #b5b5b5;
}

.combo.font {
  width: 144px;
  margin: 0 9px 0 5px;
}

.combo.style {
  width: 140px;
}

.combo.size {
  width: 70px;
}

.picker {
  display: flex;
  flex: none;
  align-items: center;
  height: 21px;
  padding-right: 3px;
  border: 1px solid #666;
  border-radius: 3px;
  background: #454545;
}

.picker select {
  flex: 1;
  padding-left: 8px;
  appearance: none;
}

.picker.sharp {
  width: 90px;
  color: #e6e6e6;
}

.picker.sharp svg {
  color: #b5b5b5;
}

.aligns {
  display: flex;
  margin: 0 6px;
}

.aligns button {
  width: 26px;
  height: 26px;
  border: 1px solid transparent;
  border-radius: 3px;
}

.aligns .on {
  background: #383838;
  border-color: #666;
}

.text-color {
  width: 28px;
  height: 18px;
  margin-left: 5px;
  background: #000;
  border: 1px solid #303030;
}

.options-right {
  display: flex;
  align-items: center;
  margin-left: auto;
  padding-right: 9px;
  gap: 10px;
  color: #b5b5b5;
}

.options-right button:first-child {
  margin-right: 5px;
}

/* Columns */
.workspace {
  flex: 1;
  display: flex;
  gap: 3px;
  min-height: 0;
  padding: 0 1px 1px;
}

.col-head {
  width: 100%;
  height: 11px;
  background: #424242;
  margin-bottom: 1px;
  flex: none;
}

.col-head.left {
  justify-content: flex-start;
  padding-left: 5px;
}

.col-head.right {
  justify-content: flex-end;
  padding-right: 6px;
}

.grip {
  display: block;
  width: 19px;
  height: 4px;
  margin: 3px auto 0;
  background: repeating-linear-gradient(90deg, #424242 0 1px, #535353 1px 2px);
}

.toolbox {
  width: 37px;
  background: #535353;
  color: #dedede;
}

.tools {
  padding-top: 10px;
}

.tool {
  position: relative;
  width: 32px;
  height: 26px;
  margin: 0 auto 0 3px;
  border: 1px solid transparent;
  border-radius: 3px;
}

.tool svg {
  width: 24px;
  height: 24px;
}

.tool.on {
  background: #383838;
  border-color: #606060;
}

.tool::after {
  content: "";
  position: absolute;
  right: 3px;
  bottom: 2px;
  border-style: solid;
  border-width: 0 0 3px 3px;
  border-color: transparent transparent #b5b5b5;
}

.tool.bare::after {
  display: none;
}

.color-minis {
  display: flex;
  gap: 7px;
  padding: 6px 0 5px 4px;
}

.fgbg {
  display: grid;
  grid-template: repeat(3, 10px) / repeat(3, 10px);
  padding-left: 3px;
  margin-bottom: 4px;
}

.fgbg button {
  width: 20px;
  height: 20px;
  border: 1px solid #383838;
  outline: 1px solid #fff;
  outline-offset: -2px;
}

.fgbg .fg {
  grid-area: 1 / 1 / 3 / 3;
  background: #000;
}

.fgbg .bg {
  grid-area: 2 / 2 / 4 / 4;
  background: #fff;
}

/* Document */
.document {
  flex: 1;
  min-width: 0;
  display: flex;
  flex-direction: column;
  background: #424242;
}

.doc-tabs {
  display: flex;
  height: 29px;
  border-bottom: 1px solid #383838;
}

.doc-tab {
  display: flex;
  align-items: center;
  gap: 9px;
  padding: 0 9px 2px;
  background: #535353;
  border-right: 1px solid #383838;
  font-size: 11px;
  font-weight: 700;
}

.doc-grid {
  flex: 1;
  min-height: 0;
  display: grid;
  grid-template-columns: 17px 1fr 16px;
  grid-template-rows: 17px 1fr;
}

.ruler-corner {
  background: #474747;
  border-right: 1px dotted #666;
  border-bottom: 1px dotted #666;
}

.ruler-x,
.ruler-y {
  position: relative;
  display: flex;
  overflow: hidden;
  background: #474747;
  color: #a3a3a3;
  font-size: 12px;
}

.ruler-x {
  padding-bottom: 1px;
}

.ruler-y {
  grid-row: 2;
  flex-direction: column;
  min-height: 0;
}

.unit {
  flex: none;
}

.unit b {
  display: block;
  font-weight: 400;
}

.ruler-x .unit {
  width: 50px;
  padding-left: 2px;
  line-height: 19px;
  border-left: 1px solid #6b6b6b;
  background:
    linear-gradient(#6b6b6b, #6b6b6b) 24px bottom / 1px 5px no-repeat,
    repeating-linear-gradient(90deg, transparent 0 4px, #6b6b6b 4px 5px) bottom / 100% 3px no-repeat;
}

.ruler-x .mark + .unit {
  margin-left: -22px;
}

/* this label starts left of the ruler */
.ruler-x .mark + .unit b {
  display: none;
}

.ruler-y .unit {
  height: 50px;
  padding: 1px 0 0 1px;
  line-height: 12px;
  border-top: 1px solid #6b6b6b;
  background:
    linear-gradient(#6b6b6b, #6b6b6b) right 24px / 5px 1px no-repeat,
    repeating-linear-gradient(transparent 0 4px, #6b6b6b 4px 5px) right / 3px 100% no-repeat;
}

.ruler-y .mark + .unit {
  margin-top: -16px;
}

.ruler-y .unit b {
  width: 8px;
  word-break: break-all;
}

.ruler-y .long {
  padding-top: 0;
  font-size: 10px;
  line-height: 11px;
}

.mark {
  position: absolute;
  background: #fff;
}

.ruler-x .mark {
  left: 1347px;
  top: 1px;
  width: 1px;
  height: 9px;
}

.ruler-y .mark {
  left: 1px;
  top: 744px;
  width: 9px;
  height: 1px;
}

.canvas {
  grid-area: 2 / 2;
  display: flex;
  align-items: center;
  justify-content: center;
  background: #282828;
  overflow: hidden;
}

.artboard {
  flex: none;
  width: 750px;
  height: 750px;
  background: #fff;
}

.scroll-y {
  grid-area: 1 / 3 / 3 / 4;
  background: #4a4a4a;
}

.status {
  display: flex;
  height: 17px;
  background: #4a4a4a;
  font-size: 10px;
}

.status input {
  width: 48px;
  padding-left: 14px;
  background: #424242;
}

.doc-info {
  display: flex;
  align-items: center;
  justify-content: space-between;
  width: 184px;
  padding: 0 5px 0 26px;
  background: #535353;
}

/* Icon strips */
.strip,
.side {
  display: flex;
  flex-direction: column;
  background: #535353;
}

.strip {
  width: 38px;
}

.side {
  width: 109px;
}

.strip .col-head {
  justify-content: flex-end;
  padding-right: 6px;
}

.dock {
  min-height: 41px;
  border-bottom: 1px solid #383838;
  padding-bottom: 5px;
}

.dock button {
  width: 100%;
  height: 28px;
  padding-top: 4px;
}

.strip .dock button {
  padding-top: 2px;
}

.strip .glyph-a {
  gap: 1px;
  font-size: 16px;
  color: #dedede;
}

.caret {
  width: 1px;
  height: 16px;
  background: #dedede;
}

.strip .glyph-p {
  font: 700 18px "Liberation Sans", sans-serif;
  color: #dedede;
}

.side .dock button {
  justify-content: flex-start;
  gap: 9px;
  padding-left: 10px;
  font-size: 10px;
  font-weight: 700;
}

/* Panels */
.panels {
  display: flex;
  flex-direction: column;
  width: 284px;
  font-size: 12px;
}

.panel {
  background: #535353;
}

.tabs {
  display: flex;
  height: 28px;
  background: #424242;
  border-bottom: 1px solid #383838;
  font-size: 10px;
  font-weight: 700;
  color: #999;
}

.tabs button {
  padding: 0 7px 2px;
  border-right: 1px solid #383838;
}

.tabs .on {
  margin-bottom: -1px;
  background: #535353;
  color: #f0f0f0;
}

.tabs .panel-menu {
  margin-left: auto;
  padding: 0 5px;
  border: none;
  color: #b0b0b0;
}

.recent {
  display: flex;
  padding: 9px 7px 8px;
}

.recent button {
  flex: none;
  width: 18px;
  height: 18px;
  border: 1px solid #454545;
}

.group-wrap {
  display: flex;
  height: 189px;
  border: 1px solid #3c3c3c;
}

.groups {
  flex: 1;
  margin: 0;
  padding: 1px;
  list-style: none;
  overflow: hidden;
  background: #424242;
}

.groups li {
  height: 29px;
  border-bottom: 2px solid #464646;
}

.groups button {
  height: 27px;
  gap: 8px;
  padding-left: 7px;
}

.list-scroll {
  display: flex;
  flex-direction: column;
  align-items: center;
  width: 16px;
  padding: 8px 0;
  background: #4a4a4a;
  color: #8a8a8a;
}

.list-scroll .flip {
  transform: rotate(180deg);
}

.list-scroll .thumb {
  width: 12px;
  height: 110px;
  margin: 4px 0 auto;
  background: #696969;
}

.panel-foot {
  display: flex;
  align-items: center;
  justify-content: flex-end;
  gap: 16px;
  height: 25px;
  padding-right: 28px;
  color: #dedede;
}

.panel-foot .off {
  color: #8c8c8c;
}

/* Layers */
.layers {
  flex: 1;
  min-height: 0;
  display: flex;
  flex-direction: column;
  margin-top: 3px;
  color: #8c8c8c;
  font-size: 10px;
}

.row {
  display: flex;
  align-items: center;
  height: 28px;
  padding-left: 3px;
}

.row.filter {
  height: 32px;
  padding-top: 6px;
  border-bottom: 1px solid #424242;
}

.row.blend {
  gap: 4px;
  border-bottom: 1px solid #424242;
}

.row.locks {
  height: 30px;
  padding: 0 0 1px 6px;
}

.layers .picker,
.layers .combo {
  background: #4e4e4e;
  border-color: #626262;
  color: #8c8c8c;
}

.picker.kind {
  width: 88px;
  padding-left: 8px;
}

.picker.kind select {
  padding-left: 3px;
}

.picker.mode {
  width: 130px;
}

.layers .picker > svg:last-child,
.layers .combo svg {
  color: #6e6e6e;
}

.filters {
  display: flex;
  align-items: center;
  gap: 12px;
  padding-left: 11px;
  color: #a3a3a3;
}

.toggle {
  height: 18px;
}

.toggle input {
  position: absolute;
  opacity: 0;
}

.toggle span {
  display: block;
  width: 10px;
  height: 18px;
  border-radius: 5px;
  background: radial-gradient(circle at 5px 5px, #a3a3a3 4px, transparent 5px), #484848;
}

.combo.percent {
  flex: none;
  width: 51px;
}

.percent input {
  background: #474747;
  border: 1px solid #4e4e4e;
}

.locks label {
  margin: 0 4px 0 auto;
}

.blend label {
  margin-left: auto;
}

.row .percent {
  margin-right: 53px;
}

.lock-set {
  display: flex;
  align-items: center;
  gap: 9px;
  padding-left: 9px;
  color: #a3a3a3;
}

.layer-list {
  flex: 1;
  background: linear-gradient(#4a4a4a, #4a4a4a) right / 16px 100% no-repeat #4e4e4e;
  border-bottom: 1px solid #3c3c3c;
}

.layer {
  display: flex;
  height: 41px;
  margin-right: 16px;
  border-bottom: 1px solid #424242;
}

.eye {
  width: 30px;
  background: #535353;
  border-right: 1px solid #424242;
}

.layer-main {
  flex: 1;
  display: flex;
  align-items: center;
  padding: 0 16px 0 4px;
  background: #6a6a6a;
  color: #fff;
}

.preview {
  width: 32px;
  height: 32px;
  margin-right: 10px;
  background: #fff;
  border: 1px solid #222;
}

.layer-main em {
  flex: 1;
}

.layers .panel-foot {
  height: 24px;
  gap: 15px;
  padding-right: 27px;
}

.fx {
  font-style: italic;
  font-size: 13px;
}

.more {
  position: relative;
}

.more::after {
  content: "";
  position: absolute;
  right: -3px;
  bottom: -2px;
  border-style: solid;
  border-width: 2px 2px 0;
  border-color: #fff transparent;
}

/* Taskbar */
.taskbar {
  display: flex;
  gap: 1px;
  height: 40px;
  background: #1c1c1c;
  color: #fff;
}

.taskbar > button {
  width: 48px;
}

.taskbar > .start {
  width: 50px;
  padding-right: 2px;
}

.taskbar .open {
  background: linear-gradient(#76b9ed, #76b9ed) center bottom / 40px 2px no-repeat;
}

.taskbar .current {
  background: linear-gradient(#76b9ed, #76b9ed) center bottom / 48px 2px no-repeat #484848;
}

.tray {
  display: flex;
  align-items: center;
  gap: 9px;
  margin-left: auto;
}

.tray .up {
  margin-right: 3px;
}

.tray .clock {
  flex-direction: column;
  line-height: 18px;
}

.notify {
  position: relative;
  margin: 0 22px 0 8px;
}

.notify span {
  position: absolute;
  left: 8px;
  top: 7px;
  width: 16px;
  height: 16px;
  border: 1px solid #888;
  border-radius: 8px;
  background: #333;
  font-size: 11px;
  line-height: 14px;
  text-align: center;
}

.show-desktop {
  width: 5px;
  height: 40px;
  margin-left: -12px;
  border-left: 1px solid #666;
}
```
